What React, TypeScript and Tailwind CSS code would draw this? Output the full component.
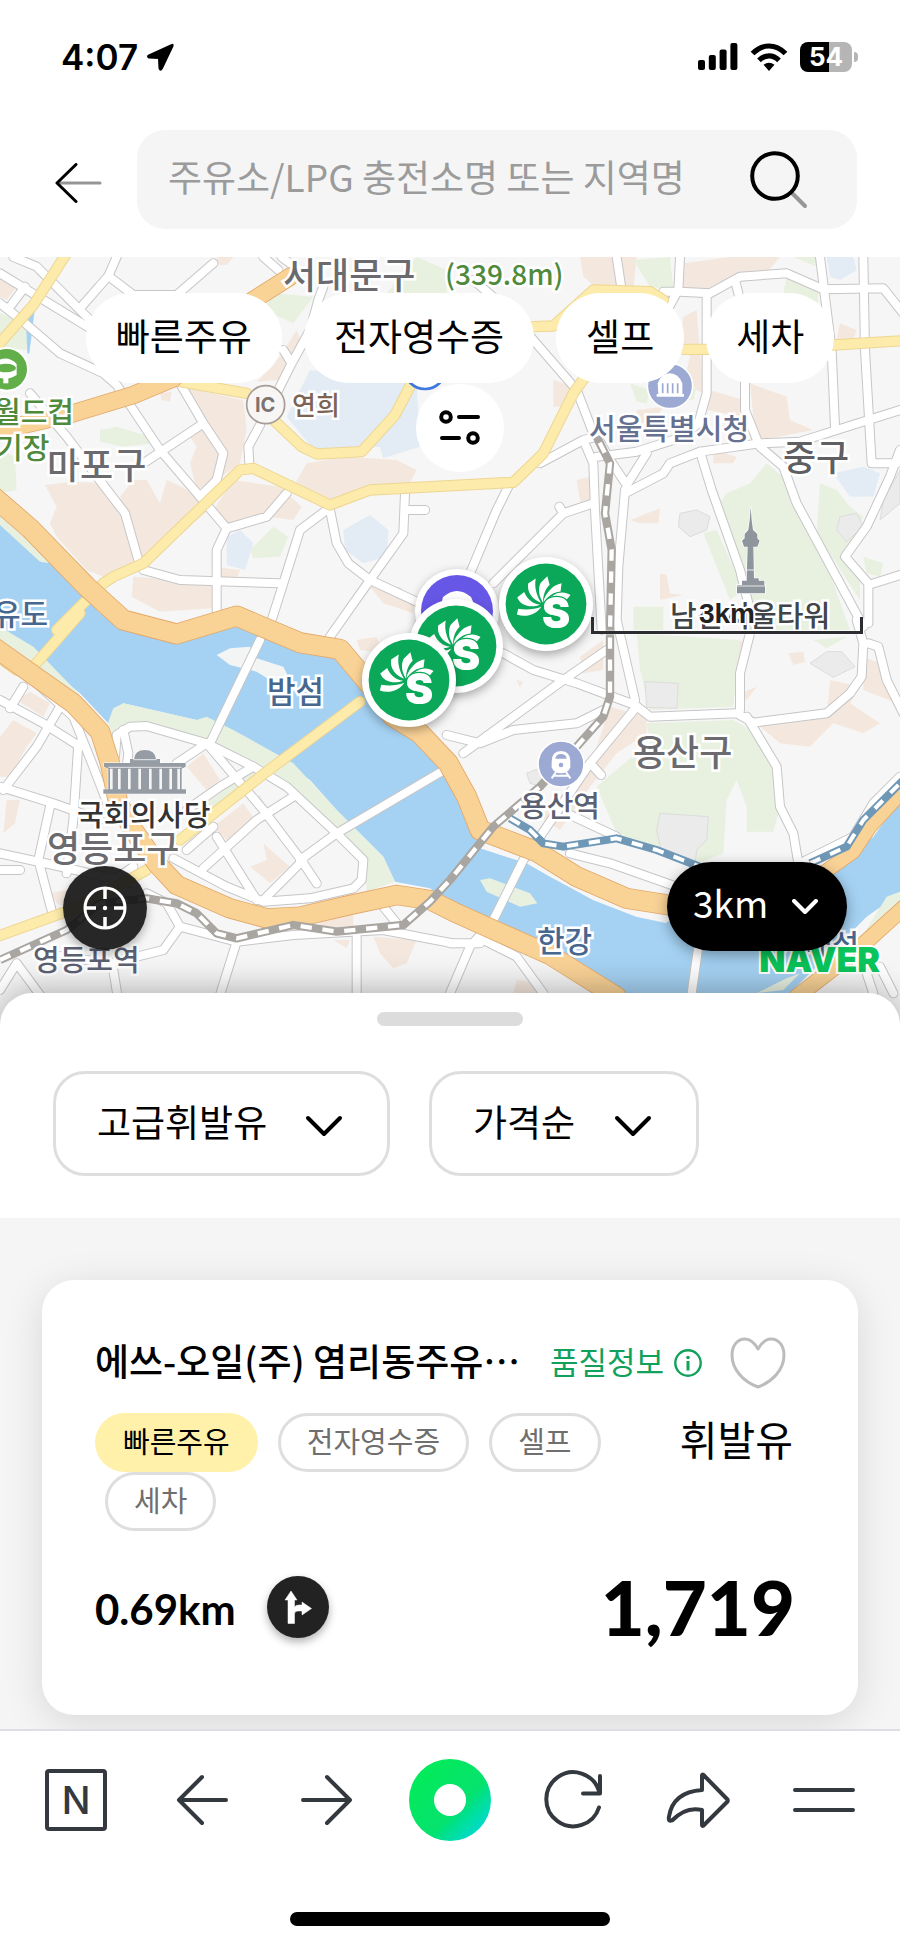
import type { ReactNode } from "react";

type Sector = {
  dx: number;
  dy: number;
  urban: string[];
  park: string[];
  campus: string[];
  blocks: string[];
  streets: string[];
  yellow: string[];
};

const sectors: Sector[] = [
  {
    dx: 0,
    dy: 0,
    urban: [
      "M0 80L50 110L20 150L0 140Z",
      "M560 410C640 430 680 440 730 450L740 540L720 640L650 690L590 720L570 640L590 590L570 560L610 520Z",
      "M480 430L515 425L510 455L485 450Z",
      "M135 705L220 695L300 700L370 790L410 940L320 985L260 960L170 860L150 820L170 770Z",
      "M400 690L440 690L480 760L500 690L545 710L590 740L640 770L430 940L400 860L360 740Z",
      "M700 690L840 710L905 770L880 810L800 800L680 830L640 780Z",
      "M920 640L1040 620L1190 630L1250 660L1230 700L1110 720L990 765L880 710Z",
      "M400 980L540 990L640 1000L635 1075L480 1085L395 1040Z",
      "M640 950L720 960L710 985L650 985Z",
      "M890 240L910 290L840 390L770 395L840 320Z",
      "M1110 1010L1200 1010L1245 1060L1240 1090L1150 1060Z",
      "M650 21L700 21L680 45L650 45Z",
    ],
    park: [
      "M300 540L350 530L450 560L460 580L370 590L300 575Z",
      "M0 190L80 220L80 300L0 290Z",
      "M0 600L45 620L50 720L0 730Z",
      "M820 130L940 140L880 220L790 180Z",
      "M1250 21L1340 60L1340 130L1160 130Z",
      "M750 900L820 830L865 860L840 920L760 925Z",
    ],
    campus: [
      "M930 360L1250 400L1260 590L1150 625L1140 590L950 610L860 500Z",
      "M680 860L720 840L760 880L735 960L680 945Z",
      "M1030 840L1110 795L1165 840L1160 920L1090 940L1035 900Z",
    ],
    blocks: [],
    streets: [
      "M0 70L90 125L270 235",
      "M0 160L70 215L180 310L310 370L350 405L480 600L600 740L680 835L800 800L860 730",
      "M40 21L110 50L290 230M30 170L75 110",
      "M350 21L325 78L240 175M325 78L400 135L530 135L640 40",
      "M790 21L835 60M845 21L870 40",
      "M540 400L610 520L670 610L650 690L600 740M610 520L430 640",
      "M90 430L200 560L310 705L375 790L415 930M430 960L540 990L840 1000",
      "M970 110L955 150L930 240L875 340L835 420M850 300L875 340",
      "M780 525L745 590L748 640",
      "M680 835L650 900L650 1080",
      "M980 780L900 840L850 1000L815 1110",
      "M990 780L1010 880L1045 940L1110 990L1250 1055",
      "M1215 730L1210 850L1110 990L990 1160M1215 780L1275 780",
    ],
    yellow: [
      "M200 10L100 165L-10 290",
      "M540 395L740 430M810 500L905 590L950 612L1085 605L1185 495L1240 390",
      "M170 1140L310 1000L340 980L430 940L720 660L760 655L990 765L1110 720L1540 697L1630 610L1720 430L1770 360",
      "M0 560L70 540",
    ],
  },
  {
    dx: 1350,
    dy: 0,
    urban: [
      "M390 21L560 21L550 120L430 105L400 80Z",
      "M700 40L840 21L990 21L940 80L860 100L780 130L690 110Z",
      "M700 200L740 180L760 430L700 400L720 320L690 280Z",
      "M900 400L1010 440L1020 510L1090 540L930 570L910 500Z",
      "M1170 220L1220 240L1210 270L1160 270Z",
      "M780 420L880 450L880 500L770 480Z",
      "M310 390L370 410L350 470L310 470Z",
      "M380 690L420 680L420 750L390 755Z",
      "M540 810L630 775L625 820L570 820Z",
      "M630 970L650 975L660 1030L700 1035L630 1050Z",
      "M790 600L860 620L850 640L790 640Z",
      "M560 480L640 470L600 530L560 510Z",
    ],
    park: [
      "M550 30L660 21L670 120L600 110Z",
      "M1010 80L1110 100L1100 180L1000 130Z",
      "M1030 21L1100 21L1100 50Z",
      "M540 400L600 420L590 460L560 455Z",
      "M950 640L1010 690L1100 860L1200 1140L930 1140L880 1030L800 770L830 730L900 700Z",
      "M1110 700L1160 720L1200 770L1240 800L1190 920L1230 970L1230 1050L1100 850Z",
      "M760 850L800 840L880 1020L840 1050Z",
      "M1240 920L1300 940L1290 980L1250 970Z",
      "M550 1070L640 1070L640 1140L550 1140Z",
      "M690 400L740 410L730 450L700 450Z",
    ],
    campus: [
      "M1130 21L1210 21L1220 60L1170 90L1140 80Z",
      "M1150 670L1240 650L1290 670L1270 740L1200 740Z",
    ],
    blocks: [
      "M690 790L740 780L780 800L770 840L720 860L685 830Z",
      "M1170 800L1220 790L1240 830L1190 875L1160 840Z",
      "M1350 660L1350 760L1290 810L1300 750Z",
    ],
    streets: [
      "M500 21L515 120M690 21L685 120L635 210",
      "M640 125L690 125L780 130L870 80L1010 70L1120 118L1300 115L1360 190",
      "M1110 21L1145 300L1155 530M1240 21L1245 300L1265 640L1340 640",
      "M855 90L870 150M770 130L770 430L745 520M885 380L885 480L925 580",
      "M70 90L140 150L250 270L380 420L430 550",
      "M270 640L400 570L440 560M400 570L430 640L435 780L455 1140",
      "M440 620L560 605L700 560L745 520",
      "M1350 480L1160 540L1050 575L930 580L750 605L660 640L640 670L525 730",
      "M590 610L530 705L480 630L430 540",
      "M525 720L505 950L500 1110L555 1350",
      "M750 605L785 720L870 960L910 1120",
      "M930 590L1000 650L1040 760L1240 1130",
      "M1350 600L1320 680L1250 830L1185 920L1255 1000L1255 1120M1255 1005L1350 975",
      "M430 760L340 790L130 1000M340 790L328 770",
      "M180 700L140 780L60 970",
    ],
    yellow: [
      "M250 230L310 228L430 120L600 125L640 150",
      "M700 298L780 298M1150 285L1360 272",
    ],
  },
  {
    dx: 0,
    dy: 1110,
    urban: [
      "M50 240L90 215L150 250L130 290Z",
      "M0 350L40 300L110 340L80 380L30 470L0 470Z",
      "M20 540L60 540L45 610L10 640Z",
      "M150 820L200 810L240 880L170 850Z",
      "M560 440L610 400L660 480L620 510Z",
      "M640 620L730 550L765 600L690 670Z",
      "M755 540L780 525L805 575L785 590Z",
      "M790 670L870 740L810 790L750 740L800 720Z",
      "M1120 950L1250 960L1220 1030L1180 1045L1140 1000Z",
      "M1070 60L1130 50L1150 100L1080 90Z",
      "M960 890L1060 880L1060 920L960 930Z",
      "M1000 960L1050 960L1040 985Z",
    ],
    park: [
      "M0 20L100 80L240 225L210 220L120 150L0 70Z",
      "M600 560L760 450L800 460L640 590Z",
    ],
    campus: [],
    blocks: [],
    streets: [
      "M345 410L350 345L390 320L440 318L620 370L760 440L860 500L1010 640L1090 720L1085 780L1060 805L930 835L790 845L680 800L520 715",
      "M370 330L385 400L380 440M530 430L620 370L790 570L900 715L950 790",
      "M760 440L660 500L560 570",
      "M880 530L770 600L610 745M650 650L770 840M560 690L640 620M910 720L790 840M1010 640L900 720",
      "M1350 440L1010 640M780 60L630 370",
      "M0 110L110 190L220 290L280 440L330 570M0 240L130 310L240 380",
      "M235 370L220 600L200 760M70 200L30 265M180 260L110 380L10 510",
      "M0 500L160 550L300 600M150 560L115 720L160 890M0 700L160 735L400 790M0 750L60 750",
      "M440 820L500 850L540 920L710 965L880 945L1150 930L1280 955L1360 970",
      "M540 920L490 990L330 1030L120 1000M710 965L660 1125M1070 950L1070 1125M340 1050L352 1125M50 1030L120 1125M50 1030L0 1110",
      "M1150 860L1190 910M400 740L300 810",
    ],
    yellow: [
      "M240 -20L100 140M0 115L50 150",
      "M1080 245L800 455L540 660M440 750L240 860L-10 950",
    ],
  },
  {
    dx: 1350,
    dy: 1110,
    urban: [
      "M390 110L460 60L460 150L400 160Z",
      "M480 260L590 290L590 340L500 400L420 500L330 630L270 590L420 440Z",
      "M850 70L880 60L870 220L920 200L890 240L850 200Z",
      "M1140 180L1230 200L1200 250L1290 310L1240 340L1150 310L1080 380L990 370L930 320L1130 290Z",
      "M1015 100L1060 95L1065 125L1030 135Z",
      "M1240 110L1290 130L1340 250L1240 210Z",
      "M200 1080L260 1085L280 1120L190 1120Z",
      "M200 180L218 185L210 205Z",
    ],
    park: [
      "M560 40L870 60L850 260L600 270L570 150Z",
      "M590 310L850 300L920 340L980 440L990 560L970 635L890 635L890 560L860 480L830 540L820 700L730 735L500 640L440 500L510 440L600 370Z",
      "M1090 60L1190 50L1130 85Z",
      "M90 780L120 775L240 820L262 850L210 860L110 815Z",
      "M1230 960L1310 830L1350 815L1350 870L1250 950Z",
      "M920 1120L1010 1075L1050 1060L1000 1110Z",
    ],
    campus: [],
    blocks: [
      "M585 185L685 190L680 265L590 262Z",
      "M630 580L775 590L770 660L740 690L735 735L635 700L620 630Z",
      "M1080 130L1130 95L1175 95L1215 140L1150 172Z",
      "M230 460L280 440L280 500L240 490Z",
    ],
    streets: [
      "M160 100L250 150L380 190L555 255L600 290L860 280L910 308L1130 280L1200 220L1235 170L1240 70L1220 0",
      "M900 40L870 160L870 270M890 290L980 440L990 560L1030 640L1045 730",
      "M470 90L340 180L190 290L40 400M-10 345L90 370L190 330L380 310L460 270",
      "M560 260L420 430L270 650L220 720L130 900L60 980L0 1120M0 970L90 970M100 960L200 1010L280 1120",
      "M350 580L500 650M360 700L480 730L680 800M430 440L453 465",
      "M1255 70L1285 80L1310 180L1360 280",
      "M745 980L725 1120M1060 725L1210 650L1270 550L1350 470M1250 1060L1270 1120M1290 1040L1330 1120",
    ],
    yellow: [],
  },
];

const expressways = [
  { width: 58, d: "M-20 740L90 835L260 1010L370 1110L530 1152L710 1098L900 1178L1020 1198L1110 1305L1180 1400L1260 1450L1345 1540L1400 1640L1440 1740L1610 1805L1730 1880L1880 1945L2100 1980L2400 1900" },
  { width: 40, d: "M2440 1890L2560 1805L2610 1730L2720 1610" },
  { width: 56, d: "M-20 1190L100 1275L220 1360L300 1445L330 1540L355 1660L400 1740L470 1840L530 1905L690 1975L800 2005L900 2000L1050 1965L1190 1935L1290 1950L1360 1985L1500 2048L1650 2115L1850 2240" },
  { width: 44, d: "M2390 2240L2560 2110L2720 1965" },
  { width: 50, d: "M-20 545L220 490L400 435L520 385L700 220L760 150L870 80" },
];

const grayRail =
  "M0 2130L200 2040L300 1960L440 1945L530 1960L590 1990L650 2050L710 2065L880 2025L1010 2045L1210 2025L1290 1955L1350 1890L1480 1730L1620 1610L1730 1490L1810 1400L1830 1340L1830 1150L1835 900L1815 790L1830 640L1790 560";
const blueRail =
  "M1530 1705L1590 1740L1630 1780L1690 1790L1850 1765L1970 1800L2100 1850M2430 1840L2540 1790L2590 1710L2710 1590";

function MapCanvas() {
  const layer = (pick: (s: Sector) => string[], attrs: Record<string, string | number>) => (
    <g {...attrs}>
      {sectors.map((s, i) => (
        <g key={i} transform={`translate(${s.dx} ${s.dy})`}>
          {pick(s).map((d) => (
            <path key={d} d={d} />
          ))}
        </g>
      ))}
    </g>
  );
  const line = { fill: "none", strokeLinecap: "round", strokeLinejoin: "round" } as const;
  return (
    <svg viewBox="0 21 2700 2304" preserveAspectRatio="xMidYMin slice" className="absolute inset-0 size-full" aria-hidden="true">
      <rect y="0" width="2700" height="2400" fill="#f6f6f6" />
      {layer((s) => s.urban, { fill: "#f4e8de" })}
      {layer((s) => s.park, { fill: "#e8f1e0" })}
      {layer((s) => s.campus, { fill: "#e3ecf4" })}
      {layer((s) => s.blocks, { fill: "#ebebeb", stroke: "#dcdcdc", strokeWidth: 3 })}
      <path d="M80 200L105 150L85 310Z" fill="#a5d2f3" stroke="#a5d2f3" strokeWidth="6" />
      <path
        fill="#a5d2f3"
        d="M0 800L150 940L300 1090L370 1130L530 1180L710 1130L900 1205L1020 1230L1130 1370L1250 1470L1350 1590L1400 1700L1460 1800L1580 1840L1650 1880L1780 1950L1910 2000L2000 2015L2250 1980L2490 1870L2560 1810L2620 1760L2700 1650L2700 1930L2600 2000L2370 2229L1850 2229L1700 2130L1500 2050L1350 1965L1290 1915L1185 1895L1150 1820L1010 1680L930 1590L760 1480L590 1410L370 1360L325 1420L240 1330L130 1240L0 1160Z"
      />
      <path d="M1440 1795L1580 1840L1780 1950L1910 2000L2000 2020L2000 1950L1780 1880L1440 1750Z" fill="#f6f6f6" />
      <path
        fill="#e8f1e0"
        d="M325 1415L340 1375L370 1360L590 1410L620 1400L700 1440L880 1540L1010 1680L1150 1820L1185 1895L1100 1925L1095 1820L1000 1730L850 1590L760 1540L620 1480L450 1420L370 1425L340 1480Z"
      />
      <path fill="#e8f1e0" d="M0 800L60 850L150 940L120 935L0 825ZM0 1130L100 1190L240 1335L200 1320L120 1250L0 1170Z" />
      <path fill="#f3f4f4" d="M650 1215L690 1195L750 1190L770 1225L850 1250L860 1270L870 1310L810 1290L770 1265L690 1245Z" />
      <path fill="#e8f1e0" d="M1440 1890L1470 1885L1590 1930L1612 1960L1560 1970L1460 1925ZM2270 2229L2360 2185L2400 2170L2350 2220ZM2580 2070L2660 1940L2700 1925L2700 1980L2600 2060Z" />

      {layer((s) => s.streets, { ...line, stroke: "#c6c6c8", strokeWidth: 30 })}
      {layer((s) => s.streets, { ...line, stroke: "#ffffff", strokeWidth: 24 })}
      {layer((s) => s.yellow, { ...line, stroke: "#eed693", strokeWidth: 34 })}
      {layer((s) => s.yellow, { ...line, stroke: "#fcebaa", strokeWidth: 28 })}
      {expressways.map((e) => (
        <path key={e.d} d={e.d} {...line} stroke="#e3a869" strokeWidth={e.width + 5} />
      ))}
      {expressways.map((e) => (
        <path key={e.d} d={e.d} {...line} stroke="#f9d296" strokeWidth={e.width} />
      ))}
      <path d={grayRail} {...line} strokeLinecap="butt" stroke="#a9a5a0" strokeWidth="25" />
      <path d={grayRail} {...line} strokeLinecap="butt" stroke="#ffffff" strokeWidth="13" strokeDasharray="34 32" />
      <path d={blueRail} {...line} strokeLinecap="butt" stroke="#6f97b6" strokeWidth="24" />
      <path d={blueRail} {...line} strokeLinecap="butt" stroke="#ffffff" strokeWidth="12" strokeDasharray="34 32" />

      {/* landmark symbols */}
      <g>
        <circle cx="20" cy="358" r="64" fill="#62ae49" stroke="#fff" strokeWidth="6" />
        <path d="M-20 340Q20 310 50 342L50 375Q20 395 -20 378Z" fill="#fff" />
        <ellipse cx="18" cy="354" rx="30" ry="13" fill="#62ae49" />
        <path d="M10 380V400H25V380" fill="#fff" />
        <circle cx="1275" cy="355" r="62" fill="#ffffff" stroke="#3f78e0" strokeWidth="8" />
        <circle cx="797" cy="464" r="57" fill="#f8f6f5" stroke="#a79c97" strokeWidth="5" />
        <circle cx="2010" cy="408" r="68" fill="#9ca9d3" stroke="#fff" strokeWidth="5" />
        <path d="M1973 400Q1985 370 2010 370Q2035 370 2047 400V432H2052V440H1970V432H1975Z" fill="#fff" />
        <path d="M1988 400V430M2003 400V430M2018 400V430M2033 400V430" stroke="#9ca9d3" strokeWidth="5" />
        <circle cx="1683" cy="1542" r="69" fill="#9ca9d3" stroke="#fff" strokeWidth="5" />
        <path d="M1655 1535Q1655 1503 1683 1503Q1711 1503 1711 1535V1552Q1705 1570 1683 1570Q1661 1570 1655 1552Z" fill="#fff" />
        <path d="M1666 1526Q1668 1512 1683 1512Q1698 1512 1700 1526Z" fill="#9ca9d3" />
        <circle cx="1683" cy="1545" r="7" fill="#9ca9d3" />
        <path d="M1668 1566L1655 1585M1698 1566L1711 1585M1660 1577H1706" stroke="#fff" strokeWidth="6" />
        <path
          d="M2252 770L2255 810L2259 840L2272 852V865L2279 872L2272 890H2260L2262 985H2276V992H2293V1005H2295V1030H2211V1005H2226V992H2240V985L2243 890H2232L2226 872L2234 865V852L2245 840L2249 810Z"
          fill="#8f959d"
          stroke="#fff"
          strokeWidth="4"
          paintOrder="stroke"
        />
        <path d="M2240 960H2264M2211 1008H2295" stroke="#e6e8ea" strokeWidth="3" />
        <path
          d="M402 1527Q405 1500 434 1500Q465 1500 468 1527H480V1539H557V1550L545 1556V1618H558V1631H310V1618H325V1556L312 1550V1539H390V1527Z"
          fill="#969ca4"
          stroke="#fff"
          strokeWidth="3"
          paintOrder="stroke"
        />
        <path d="M334 1556V1618M358 1556V1618M388 1556V1618M419 1556V1618M451 1556V1618M482 1556V1618M512 1556V1618M536 1556V1618" stroke="#f4f4f4" strokeWidth="8" />
        <path d="M325 1552H545M400 1529H470" stroke="#e6e8ea" strokeWidth="3" />
      </g>
    </svg>
  );
}

const halo = "[-webkit-text-stroke:5px_#ffffff] [paint-order:stroke_fill]";

const labels = [
  { text: "서대문구", className: "left-[283px] -top-[6px] text-4xl text-[#6b6b6f]" },
  { text: "(339.8m)", className: "left-[445px] -top-px text-[28px] text-[#4f8a3c]" },
  { text: "마포구", className: "left-[47px] top-[184px] text-4xl text-[#6b6b6f]" },
  { text: "연희", className: "left-[292px] top-[131px] text-[26px] text-[#7d6353]" },
  { text: "월드컵", className: "-left-[6px] top-[135px] text-[29px] text-[#4f8a3c]" },
  { text: "기장", className: "-left-[4px] top-[171px] text-[29px] text-[#4f8a3c]" },
  { text: "서울특별시청", className: "left-[589px] top-[152px] text-[29px] text-[#66708f]" },
  { text: "중구", className: "left-[783px] top-[176px] text-4xl text-[#5f5f63]" },
  { text: "남산서울타워", className: "left-[670px] top-[339px] text-[29px] text-[#414447]" },
  { text: "유도", className: "-left-[7px] top-[337px] text-[30px] text-[#47678f]" },
  { text: "밤섬", className: "left-[267px] top-[414px] text-[31px] text-[#47678f]" },
  { text: "국회의사당", className: "left-[77px] top-[538px] text-[29px] text-[#333333]" },
  { text: "영등포구", className: "left-[47px] top-[567px] text-4xl text-[#6b6b6f]" },
  { text: "용산구", className: "left-[633px] top-[471px] text-4xl text-[#6b6b6f]" },
  { text: "용산역", className: "left-[520px] top-[529px] text-[29px] text-[#5c6073]" },
  { text: "한강", className: "left-[537px] top-[664px] text-[30px] text-[#47678f]" },
  { text: "서래섬", className: "left-[779px] top-[668px] text-[29px] text-[#47678f]" },
  { text: "영등포역", className: "left-[33px] top-[683px] text-[29px] text-[#5c6073]" },
];

const mapFilters = ["빠른주유", "전자영수증", "셀프", "세차"];

function StationMarker() {
  return (
    <svg viewBox="-145 -145 290 290" className="size-24 drop-shadow-[0_4px_5px_rgba(0,0,0,0.3)]" aria-hidden="true">
      <circle r="142" fill="#fff" />
      <circle r="122" fill="#0aa858" />
      <g fill="#fff">
        <path d="M-88 32L-84 14C-60 19 -35 16 -14 8C-30 32 -60 42 -88 32Z" />
        <path d="M-87 -20L-66 -36C-56 -12 -38 0 -18 2C-45 12 -76 6 -87 -20Z" />
        <path d="M-54 -62L-31 -77C-36 -50 -28 -25 -15 -4C-42 -14 -58 -36 -54 -62Z" />
        <path d="M-16 -64L4 -84L11 -58C-3 -45 -9 -25 -9 -4C-22 -24 -25 -46 -16 -64Z" />
        <path d="M8 -38C20 -54 34 -60 47 -63L44 -38C20 -36 4 -22 -7 -4C-8 -16 0 -28 8 -38Z" />
        <path d="M24 -27C42 -38 60 -36 74 -27L62 -13C40 -19 14 -14 -4 2C2 -12 12 -20 24 -27Z" />
      </g>
      <text x="-12" y="72" fontSize="128" fontWeight="900" fontFamily="Inter, sans-serif" fill="#fff" stroke="#0aa858" strokeWidth="8" paintOrder="stroke">
        S
      </text>
    </svg>
  );
}

function Chevron({ className }: { className: string }) {
  return (
    <svg viewBox="0 0 38 22" className={className} fill="none" stroke="currentColor" strokeWidth="4" strokeLinecap="round" strokeLinejoin="round" aria-hidden="true">
      <path d="M3 3L19 19L35 3" />
    </svg>
  );
}

function StatusBar() {
  return (
    <div className="flex h-[114px] items-center justify-between pr-[42px] pl-[61px]">
      <div className="flex items-center gap-2">
        <span className="font-[Inter] text-[35px] leading-none font-semibold">4:07</span>
        <svg viewBox="0 0 28 28" className="size-7" aria-hidden="true">
          <path d="M26 2L3 12.500Q1 13.500 3 14.500L12.500 15Q13 15 13 15.500L13.500 25.500Q14.500 28 15.800 25.500L26.500 3Q27 1.500 26 2Z" fill="#000" stroke="#000" strokeWidth="2" strokeLinejoin="round" />
        </svg>
      </div>
      <div className="flex items-center gap-3">
        <svg viewBox="0 0 40 28" className="h-7 w-10" aria-hidden="true">
          <rect x="0" y="17" width="7" height="10" rx="2" />
          <rect x="10.800" y="12" width="7" height="15" rx="2" />
          <rect x="21.600" y="6.500" width="7" height="20.500" rx="2" />
          <rect x="32.400" y="0" width="7" height="27" rx="2" />
        </svg>
        <svg viewBox="0 0 38 28" className="h-7 w-[38px]" fill="none" stroke="#000" strokeWidth="5.200" aria-hidden="true">
          <path d="M2.500 10.500Q10 3 19 3T35.500 10.500" />
          <path d="M9 17.300Q13.500 12.800 19 12.800T29 17.300" />
          <path d="M19 28L13.500 21.800Q19 17.500 24.500 21.800Z" fill="#000" stroke="none" />
        </svg>
        <div className="flex items-center gap-[2px]">
          <div className="flex h-[30px] w-[52px] items-center justify-center rounded-lg bg-linear-to-r from-black from-55% to-[#b5b5b5] to-55% font-[Inter] text-[26px] leading-none font-bold text-white">
            54
          </div>
          <div className="h-[10px] w-1 rounded-r-full bg-[#b5b5b5]" />
        </div>
      </div>
    </div>
  );
}

function SearchHeader() {
  return (
    <header className="flex items-center gap-[35px] pt-4 pr-[43px] pb-7 pl-[55px]">
      <button type="button" aria-label="뒤로" className="mt-[6px]">
        <svg viewBox="0 0 47 40" className="h-10 w-[47px]" fill="none" strokeWidth="3" strokeLinecap="round" strokeLinejoin="round" aria-hidden="true">
          <path d="M3 20H45" stroke="#969696" />
          <path d="M21 1.500L2 20L21 38.500" stroke="#000" />
        </svg>
      </button>
      <form className="flex flex-1 items-center rounded-[28px] bg-[#f5f5f5] pr-[49px] pl-[31px]">
        <input
          type="text"
          aria-label="주유소 검색"
          placeholder="주유소/LPG 충전소명 또는 지역명"
          className="h-[99px] min-w-0 flex-1 bg-transparent pb-2 text-[37px] outline-none placeholder:text-[#9b9b9b]"
        />
        <button type="button" aria-label="검색">
          <svg viewBox="0 0 58 58" className="size-[58px]" fill="none" aria-hidden="true">
            <path d="M42 42L55 55" stroke="#969696" strokeWidth="4" strokeLinecap="round" />
            <circle cx="25" cy="25" r="22.800" stroke="#000" strokeWidth="4" />
          </svg>
        </button>
      </form>
    </header>
  );
}

function MapPanel() {
  return (
    <section aria-label="지도" className="relative -mb-8 min-h-[600px] flex-1 overflow-hidden bg-[#f6f6f6]">
      <MapCanvas />
      {labels.map((l) => (
        <span key={l.text} className={`absolute leading-tight font-medium whitespace-nowrap ${halo} ${l.className}`}>
          {l.text}
        </span>
      ))}
      <span className="absolute top-[132px] left-[255px] font-[Inter] text-[20px] leading-8 font-bold text-[#7c7470]">IC</span>

      <div className="absolute top-[312px] left-[415px]">
        <svg viewBox="-42 -42 84 84" className="size-[84px] drop-shadow-[0_2px_4px_rgba(0,0,0,0.25)]" aria-hidden="true">
          <circle r="42" fill="#fff" />
          <circle r="36" fill="#6757e6" />
          <path d="M-25 14Q-18 4 -14 -14Q0 -26 14 -14Q22 4 25 14Z" fill="#fff" />
        </svg>
      </div>
      <div className="absolute top-[341px] left-[408px]"><StationMarker /></div>
      <div className="absolute top-[299px] left-[498px]"><StationMarker /></div>
      <div className="absolute top-[375px] left-[361px]"><StationMarker /></div>

      <div className="absolute top-[339px] left-[591px] flex h-[38px] w-[272px] flex-col items-center justify-start">
        <span className="font-['Liberation_Sans'] text-[28px] leading-9 font-bold text-[#222] [-webkit-text-stroke:4px_#ffffff] [paint-order:stroke_fill]">3km</span>
        <span className="absolute bottom-0 h-[17px] w-full border-x-3 border-b-3 border-[#2c2d30] drop-shadow-[0_0_1px_#fff]" />
      </div>

      <div className="relative flex flex-col items-center gap-px pt-9 pl-5">
        <div className="flex gap-[22px]">
          {mapFilters.map((name) => (
            <button key={name} type="button" className="h-[90px] rounded-full bg-white px-[30px] pb-1 text-[37px] whitespace-nowrap">
              {name}
            </button>
          ))}
        </div>
        <button type="button" aria-label="필터" className="flex size-[88px] items-center justify-center rounded-full bg-white">
          <svg viewBox="0 0 42 36" className="h-9 w-[42px]" fill="none" stroke="#000" strokeWidth="4" strokeLinecap="round" aria-hidden="true">
            <circle cx="7" cy="7" r="4.800" />
            <path d="M20 7H39M3 28H20" />
            <circle cx="34" cy="28" r="4.800" />
          </svg>
        </button>
      </div>

      <div className="absolute right-[20px] bottom-[49px] font-[Inter] text-[34px] leading-8 font-black text-[#0bc55b] [-webkit-text-stroke:4px_#ffffff] [paint-order:stroke_fill]">
        NAVER
      </div>
      <div className="absolute right-[53px] bottom-[74px] flex items-center rounded-full bg-black text-white shadow-[0_4px_14px_rgba(0,0,0,0.35)]">
        <select aria-label="검색 반경" className="h-[89px] w-[180px] appearance-none rounded-full bg-transparent pb-2 pl-[26px] text-[37px] outline-none">
          <option>3km</option>
        </select>
        <Chevron className="pointer-events-none absolute right-[29px] h-[15px] w-[26px] [stroke-width:6]" />
      </div>
      <button
        type="button"
        aria-label="현재 위치"
        className="absolute bottom-[75px] left-[63px] flex size-[84px] items-center justify-center rounded-full bg-[#111]/90 shadow-[0_4px_10px_rgba(0,0,0,0.3)]"
      >
        <svg viewBox="0 0 44 44" className="size-11" fill="none" stroke="#fff" strokeWidth="3" aria-hidden="true">
          <circle cx="22" cy="22" r="20" />
          <path d="M22 2V13M22 31V42M2 22H13M31 22H42" strokeWidth="3.500" />
          <circle cx="22" cy="22" r="2.200" fill="#fff" stroke="none" />
        </svg>
      </button>
    </section>
  );
}

function SortSelect({ label, option, width }: { label: string; option: string; width: string }) {
  return (
    <div className={`relative flex items-center ${width}`}>
      <select
        aria-label={label}
        className="h-[105px] w-full appearance-none rounded-[32px] border-3 border-[#dedede] bg-white pb-1 pl-[41px] text-[37px] text-black outline-none"
      >
        <option>{option}</option>
      </select>
      <Chevron className="pointer-events-none absolute right-[47px] mt-1 h-[22px] w-[38px]" />
    </div>
  );
}

function Tag({ children }: { children: ReactNode }) {
  return (
    <li className="mx-[10px] flex h-[59px] items-center rounded-full border-3 border-[#dedede] px-[26px] pb-1 text-[29px] text-[#6f6f6f]">
      {children}
    </li>
  );
}

function StationCard() {
  return (
    <article className="rounded-[32px] bg-white px-[53px] pt-[55px] pb-[71px] shadow-[0_8px_40px_rgba(0,0,0,0.12)]">
      <div className="flex h-14 items-center">
        <h2 className="mr-[31px] w-[424px] pb-1 text-[37px] font-medium whitespace-nowrap">에쓰-오일(주) 염리동주유…</h2>
        <a href="#quality" className="flex items-center gap-[10px] text-[31px] whitespace-nowrap text-[#12a15c]">
          <span className="pb-1">품질정보</span>
          <svg viewBox="0 0 28 28" className="size-7" fill="none" stroke="currentColor" strokeWidth="2.400" aria-hidden="true">
            <circle cx="14" cy="14" r="12.700" />
            <path d="M14 12V21.500" strokeWidth="3" />
            <circle cx="14" cy="8.500" r="1.800" fill="currentColor" stroke="none" />
          </svg>
        </a>
        <button type="button" aria-label="찜하기" className="ml-7 shrink-0">
          <svg viewBox="0 0 56 52" className="h-[52px] w-14" fill="none" stroke="#bcbcbc" strokeWidth="3" strokeLinejoin="round" aria-hidden="true">
            <path d="M28 12C24 5 20 2 15 2C7 2 2 9 2 18C2 33 14 45 28 50C42 45 54 33 54 18C54 9 49 2 41 2C36 2 32 5 28 12Z" />
          </svg>
        </button>
      </div>
      <div className="mt-[22px] flex items-start justify-between pr-3">
        <ul className="flex w-[530px] flex-wrap">
          <li className="mr-[10px] flex h-[59px] items-center rounded-full bg-[#fff1a9] px-7 pb-1 text-[29px]">빠른주유</li>
          <Tag>전자영수증</Tag>
          <Tag>셀프</Tag>
          <Tag>세차</Tag>
        </ul>
        <span className="text-[41px] leading-[50px]">휘발유</span>
      </div>
      <div className="mt-[39px] flex items-center justify-between pr-[10px]">
        <div className="flex items-center gap-[31px]">
          <span className="mt-1 font-[Lato] text-[42px] leading-none font-bold">0.69km</span>
          <button type="button" aria-label="길찾기" className="flex size-[62px] items-center justify-center rounded-full bg-[#222] shadow-[0_4px_8px_rgba(0,0,0,0.3)]">
            <svg viewBox="0 0 28 34" className="h-[34px] w-7" fill="#fff" stroke="#fff" strokeLinejoin="round" aria-hidden="true">
              <path d="M7 1L13 10H10.500V17Q11.500 15 15 15H18V12L27.500 18.500L18 25V21H14Q10.500 21 10.500 24V33.500H4V10H1Z" strokeWidth="0.500" />
            </svg>
          </button>
        </div>
        <strong className="font-[Lato] text-[76px] leading-[74px] font-black">1,719</strong>
      </div>
    </article>
  );
}

function NavButton({ label, children }: { label: string; children: ReactNode }) {
  return (
    <button type="button" aria-label={label} className="flex size-[62px] items-center justify-center text-[#34383f]">
      {children}
    </button>
  );
}

function BrowserBar() {
  const icon = { fill: "none", stroke: "currentColor", strokeWidth: 4, strokeLinecap: "round", strokeLinejoin: "round" } as const;
  return (
    <nav aria-label="브라우저" className="relative border-t-2 border-[#dddfe2] bg-white pt-[38px]">
      <div className="flex items-center justify-between px-[45px]">
        <NavButton label="네이버 홈">
          <span className="flex size-[62px] items-center justify-center rounded-[4px] border-4 border-current font-[Inter] text-[38px] leading-none font-medium">N</span>
        </NavButton>
        <NavButton label="이전">
          <svg viewBox="0 0 54 52" className="h-[52px] w-[54px]" {...icon}>
            <path d="M28 3L5 26L28 49M5 26H52" />
          </svg>
        </NavButton>
        <NavButton label="다음">
          <svg viewBox="0 0 54 52" className="h-[52px] w-[54px]" {...icon}>
            <path d="M29 3L52 26L29 49M52 26H5" />
          </svg>
        </NavButton>
        <NavButton label="그린닷">
          <span className="flex size-[82px] shrink-0 items-center justify-center rounded-full bg-linear-135 from-[#03ea5c] from-20% via-[#06e26e] via-60% to-[#09d3f2]">
            <span className="size-8 rounded-full bg-white" />
          </span>
        </NavButton>
        <NavButton label="새로고침">
          <svg viewBox="0 0 62 62" className="size-[62px]" {...icon}>
            <path d="M55 38.500A27 27 0 1 1 55 22M56 7V24.500H39" />
          </svg>
        </NavButton>
        <NavButton label="공유">
          <svg viewBox="0 0 66 56" className="h-14 w-[66px] shrink-0" {...icon}>
            <path d="M36 3.500Q36 2 37.500 3L61.500 27.500Q62 28.500 61.500 29.500L37.500 53.500Q36 54.500 36 53V38Q20 34 6 48.500Q2 50 3 44.500Q7 20 36 18Z" />
          </svg>
        </NavButton>
        <NavButton label="메뉴">
          <svg viewBox="0 0 62 24" className="h-6 w-[62px]" {...icon}>
            <path d="M2 2H60M2 22H60" />
          </svg>
        </NavButton>
      </div>
      <div className="mx-auto mt-[81px] mb-[23px] h-[14px] w-[320px] rounded-full bg-black" />
    </nav>
  );
}

export default function App() {
  return (
    <div className="flex min-h-screen flex-col bg-white font-['Noto_Sans_CJK_KR',sans-serif] text-black">
      <StatusBar />
      <SearchHeader />
      <MapPanel />
      <main className="relative rounded-t-[32px] bg-white shadow-[0_0_36px_rgba(0,0,0,0.35)]">
        <div className="mx-auto mt-[19px] h-[14px] w-[146px] rounded-full bg-[#dcdcdc]" />
        <div className="mt-[45px] flex gap-[39px] px-[53px] pb-[42px]">
          <SortSelect label="유종" option="고급휘발유" width="w-[337px]" />
          <SortSelect label="정렬" option="가격순" width="w-[270px]" />
        </div>
        <div className="overflow-hidden bg-[#f5f5f5] px-[42px] pt-[62px] pb-[14px]">
          <StationCard />
        </div>
      </main>
      <BrowserBar />
    </div>
  );
}
